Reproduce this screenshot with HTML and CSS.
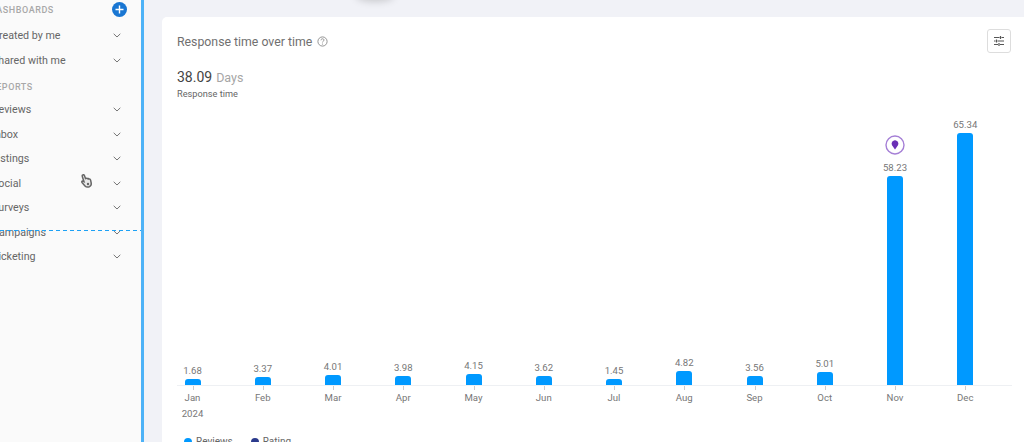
FILE: index.html
```html
<!DOCTYPE html>
<html lang="en">
<head>
    <meta charset="UTF-8">
    <title>Response time over time</title>
    <link rel="stylesheet" href="styles.css">
</head>
<body>
    <div class="page">
        <aside class="sidebar">
            <div class="nav-head nav-head-first">
                <span>Dashboards</span>
                <span class="add-button">
                    <svg width="15" height="15" viewBox="0 0 15 15"><path d="M7.5 3.5v8M3.5 7.5h8" stroke="#fff" stroke-width="1.4" fill="none"/></svg>
                </span>
            </div>
            <div class="nav-item"><span>Created by me</span><svg class="chevron" viewBox="0 0 8 5"><path d="M.7.8 4 4 7.3.8"/></svg></div>
            <div class="nav-item"><span>Shared with me</span><svg class="chevron" viewBox="0 0 8 5"><path d="M.7.8 4 4 7.3.8"/></svg></div>

            <div class="nav-head nav-head-reports"><span>Reports</span></div>
            <div class="nav-item"><span>Reviews</span><svg class="chevron" viewBox="0 0 8 5"><path d="M.7.8 4 4 7.3.8"/></svg></div>
            <div class="nav-item"><span>Inbox</span><svg class="chevron" viewBox="0 0 8 5"><path d="M.7.8 4 4 7.3.8"/></svg></div>
            <div class="nav-item"><span>Listings</span><svg class="chevron" viewBox="0 0 8 5"><path d="M.7.8 4 4 7.3.8"/></svg></div>
            <div class="nav-item"><span>Social</span><svg class="chevron" viewBox="0 0 8 5"><path d="M.7.8 4 4 7.3.8"/></svg></div>
            <div class="nav-item"><span>Surveys</span><svg class="chevron" viewBox="0 0 8 5"><path d="M.7.8 4 4 7.3.8"/></svg></div>
            <div class="nav-item"><span>Campaigns</span><svg class="chevron" viewBox="0 0 8 5"><path d="M.7.8 4 4 7.3.8"/></svg></div>
            <div class="nav-item"><span>Ticketing</span><svg class="chevron" viewBox="0 0 8 5"><path d="M.7.8 4 4 7.3.8"/></svg></div>

            <div class="drop-line"></div>
            <svg class="hand-cursor" width="14" height="16" viewBox="0 0 14 16">
                <path d="M2.5 2c.8-.6 1.6-.2 2 .8l1 2.7c.7-.5 1.4-.4 1.8.2.6-.4 1.3-.2 1.6.4.8-.2 1.5.2 1.7 1l.6 2.9c.3 1.700-.4 3-1.800 3.700-1.500.6-3.300.4-4.400-.8L2 9.500c-.5-.6-.2-1.400.6-1.400l1.400.6L2.300 3.400c-.2-.5-.1-1 .2-1.400z" fill="#e8e8e8" stroke="#666" stroke-width="1.5"/>
                <circle cx="8" cy="11" r="1.2" fill="#666"/>
            </svg>
        </aside>

        <main class="content">
            <div class="top-shadow"></div>
            <section class="card">
                <div class="card-head">
                    <div class="card-title">
                        Response time over time
                        <svg width="11" height="11" viewBox="0 0 11 11"><circle cx="5.5" cy="5.5" r="4.6" fill="none" stroke="#888" stroke-width=".9"/><path d="M4 4.300c0-2 3-2 3-.2 0 1.100-1.500 1.100-1.500 2.300" fill="none" stroke="#888" stroke-width=".9"/><circle cx="5.5" cy="8" r=".6" fill="#888"/></svg>
                    </div>
                    <button class="filter-button">
                        <svg width="10" height="10" viewBox="0 0 10 10"><path d="M0 1.500h5.500M7.500 1.500H10M6.500 0v3M0 5h1.500M3.500 5H10M2.500 3.500v3M0 8.500h4M6 8.500h4M5 7v3" stroke="#555" stroke-width="1.2" fill="none"/></svg>
                    </button>
                </div>

                <div class="summary">
                    <div><span class="summary-value">38.09</span> <span class="summary-unit">Days</span></div>
                    <div class="summary-label">Response time</div>
                </div>

                <div class="chart">
                    <div class="bars">
                        <div class="col"><span class="val">1.68</span><div class="bar" style="height:6px"></div></div>
                        <div class="col"><span class="val">3.37</span><div class="bar" style="height:8px"></div></div>
                        <div class="col"><span class="val">4.01</span><div class="bar" style="height:10px"></div></div>
                        <div class="col"><span class="val">3.98</span><div class="bar" style="height:9px"></div></div>
                        <div class="col"><span class="val">4.15</span><div class="bar" style="height:11px"></div></div>
                        <div class="col"><span class="val">3.62</span><div class="bar" style="height:9px"></div></div>
                        <div class="col"><span class="val">1.45</span><div class="bar" style="height:6px"></div></div>
                        <div class="col"><span class="val">4.82</span><div class="bar" style="height:14px"></div></div>
                        <div class="col"><span class="val">3.56</span><div class="bar" style="height:9px"></div></div>
                        <div class="col"><span class="val">5.01</span><div class="bar" style="height:13px"></div></div>
                        <div class="col">
                            <svg class="pin" width="20" height="20" viewBox="0 0 20 20"><circle cx="10" cy="10" r="9" fill="#fff" stroke="#a57fd6" stroke-width="1.4"/><path d="M10 14.500 7.200 10.500a3.300 3.300 0 1 1 5.600 0z" fill="#6a2fb5"/></svg>
                            <span class="val">58.23</span><div class="bar" style="height:209px"></div>
                        </div>
                        <div class="col"><span class="val">65.34</span><div class="bar" style="height:252px"></div></div>
                    </div>
                    <div class="months">
                        <div class="month">Jan<span class="year">2024</span></div>
                        <div class="month">Feb</div>
                        <div class="month">Mar</div>
                        <div class="month">Apr</div>
                        <div class="month">May</div>
                        <div class="month">Jun</div>
                        <div class="month">Jul</div>
                        <div class="month">Aug</div>
                        <div class="month">Sep</div>
                        <div class="month">Oct</div>
                        <div class="month">Nov</div>
                        <div class="month">Dec</div>
                    </div>
                </div>

                <div class="legend">
                    <span class="legend-item"><i class="dot dot-reviews"></i>Reviews</span>
                    <span class="legend-item"><i class="dot dot-rating"></i>Rating</span>
                </div>
            </section>
        </main>
    </div>
</body>
</html>
```

FILE: styles.css
```css
* {
    box-sizing: border-box;
}

html, body {
    margin: 0;
    height: 442px;
    overflow: hidden;
}

body {
    font-family: Roboto, Arial, sans-serif;
    color: #555;
}

.page {
    display: flex;
    height: 442px;
}

.sidebar {
    position: relative;
    width: 144px;
    flex-shrink: 0;
    background-color: #fafafa;
    border-right: 3px solid #4db2f7;
    padding: 0.5px 17px 0 0;
}

.nav-head {
    display: flex;
    justify-content: space-between;
    align-items: center;
    height: 18px;
    margin-left: -10px;
    font-size: 9px;
    font-weight: 500;
    letter-spacing: 0.55px;
    text-transform: uppercase;
    color: #a8a8a8;
}

.nav-head-first {
    margin-bottom: 5px;
}

.nav-head-reports {
    margin-top: 5px;
    margin-bottom: 2px;
}

.add-button {
    display: flex;
    width: 15px;
    height: 15px;
    margin-right: -3px;
    border-radius: 50%;
    background-color: #1976d2;
}

.nav-item {
    display: flex;
    justify-content: space-between;
    align-items: center;
    height: 24.5px;
    margin-left: -8px;
    font-size: 10.7px;
    color: #666;
}

.chevron {
    width: 8px;
    height: 5px;
    margin-right: 3px;
    fill: none;
    stroke: #757575;
    stroke-width: 1;
}

.drop-line {
    position: absolute;
    left: 0;
    right: 0;
    top: 230px;
    height: 1px;
    background-image: repeating-linear-gradient(to right, #1da1f5 0 4px, transparent 4px 7px);
}

.hand-cursor {
    position: absolute;
    left: 80px;
    top: 173px;
}

/* Main area */
.content {
    position: relative;
    flex: 1;
    min-width: 0;
    padding: 17px 0 0 18px;
    background-color: #f1f2f7;
}

.top-shadow {
    position: absolute;
    left: 212px;
    top: -12px;
    width: 38px;
    height: 12px;
    border-radius: 50%;
    box-shadow: 0 1px 8px rgba(0, 0, 0, 0.2);
}

.card {
    height: 460px;
    padding: 12px 12px 0 15px;
    background-color: #fff;
    border-radius: 5px 0 0 0;
}

.card-head {
    display: flex;
    justify-content: space-between;
    align-items: flex-start;
    height: 24px;
}

.card-title {
    display: flex;
    align-items: center;
    gap: 5px;
    height: 25px;
    font-size: 12.3px;
    color: #707070;
}

.filter-button {
    display: flex;
    align-items: center;
    justify-content: center;
    width: 24px;
    height: 24px;
    margin-right: 1px;
    padding: 0;
    background-color: #fff;
    border: 1px solid #ddd;
    border-radius: 3px;
}

.summary {
    margin-top: 14px;
}

.summary-value {
    font-size: 14px;
    color: #444;
}

.summary-unit {
    font-size: 12.5px;
    color: #a6a6a6;
}

.summary-label {
    margin-top: 2px;
    font-size: 9.2px;
    color: #666;
}

/* Chart */
.bars {
    display: flex;
    align-items: flex-end;
    gap: 39.25px;
    height: 287px;
    border-bottom: 1px solid #eef0f3;
}

.col {
    display: flex;
    flex-direction: column;
    align-items: center;
    width: 31px;
    flex-shrink: 0;
}

.val {
    margin-bottom: 2px;
    font-size: 9.6px;
    line-height: 13px;
    color: #777;
}

.bar {
    width: 16px;
    background-color: #0099ff;
    border-radius: 3px 3px 0 0;
}

.pin {
    margin-bottom: 6px;
}

.months {
    display: flex;
    gap: 39.25px;
}

.month {
    position: relative;
    width: 31px;
    flex-shrink: 0;
    padding-top: 5px;
    font-size: 9.6px;
    line-height: 13px;
    text-align: center;
    color: #777;
}

.month::before {
    content: "";
    position: absolute;
    left: 50%;
    top: 0;
    width: 1px;
    height: 4px;
    background-color: #ccc;
}

.year {
    display: block;
    margin-top: 3px;
}

.legend {
    display: flex;
    gap: 18px;
    margin-top: 16px;
    margin-left: 7px;
}

.legend-item {
    display: flex;
    align-items: center;
    gap: 4px;
    font-size: 10px;
    color: #666;
}

.dot {
    width: 8px;
    height: 8px;
    border-radius: 50%;
}

.dot-reviews {
    background-color: #0099ff;
}

.dot-rating {
    background-color: #2b3a8c;
}
```
